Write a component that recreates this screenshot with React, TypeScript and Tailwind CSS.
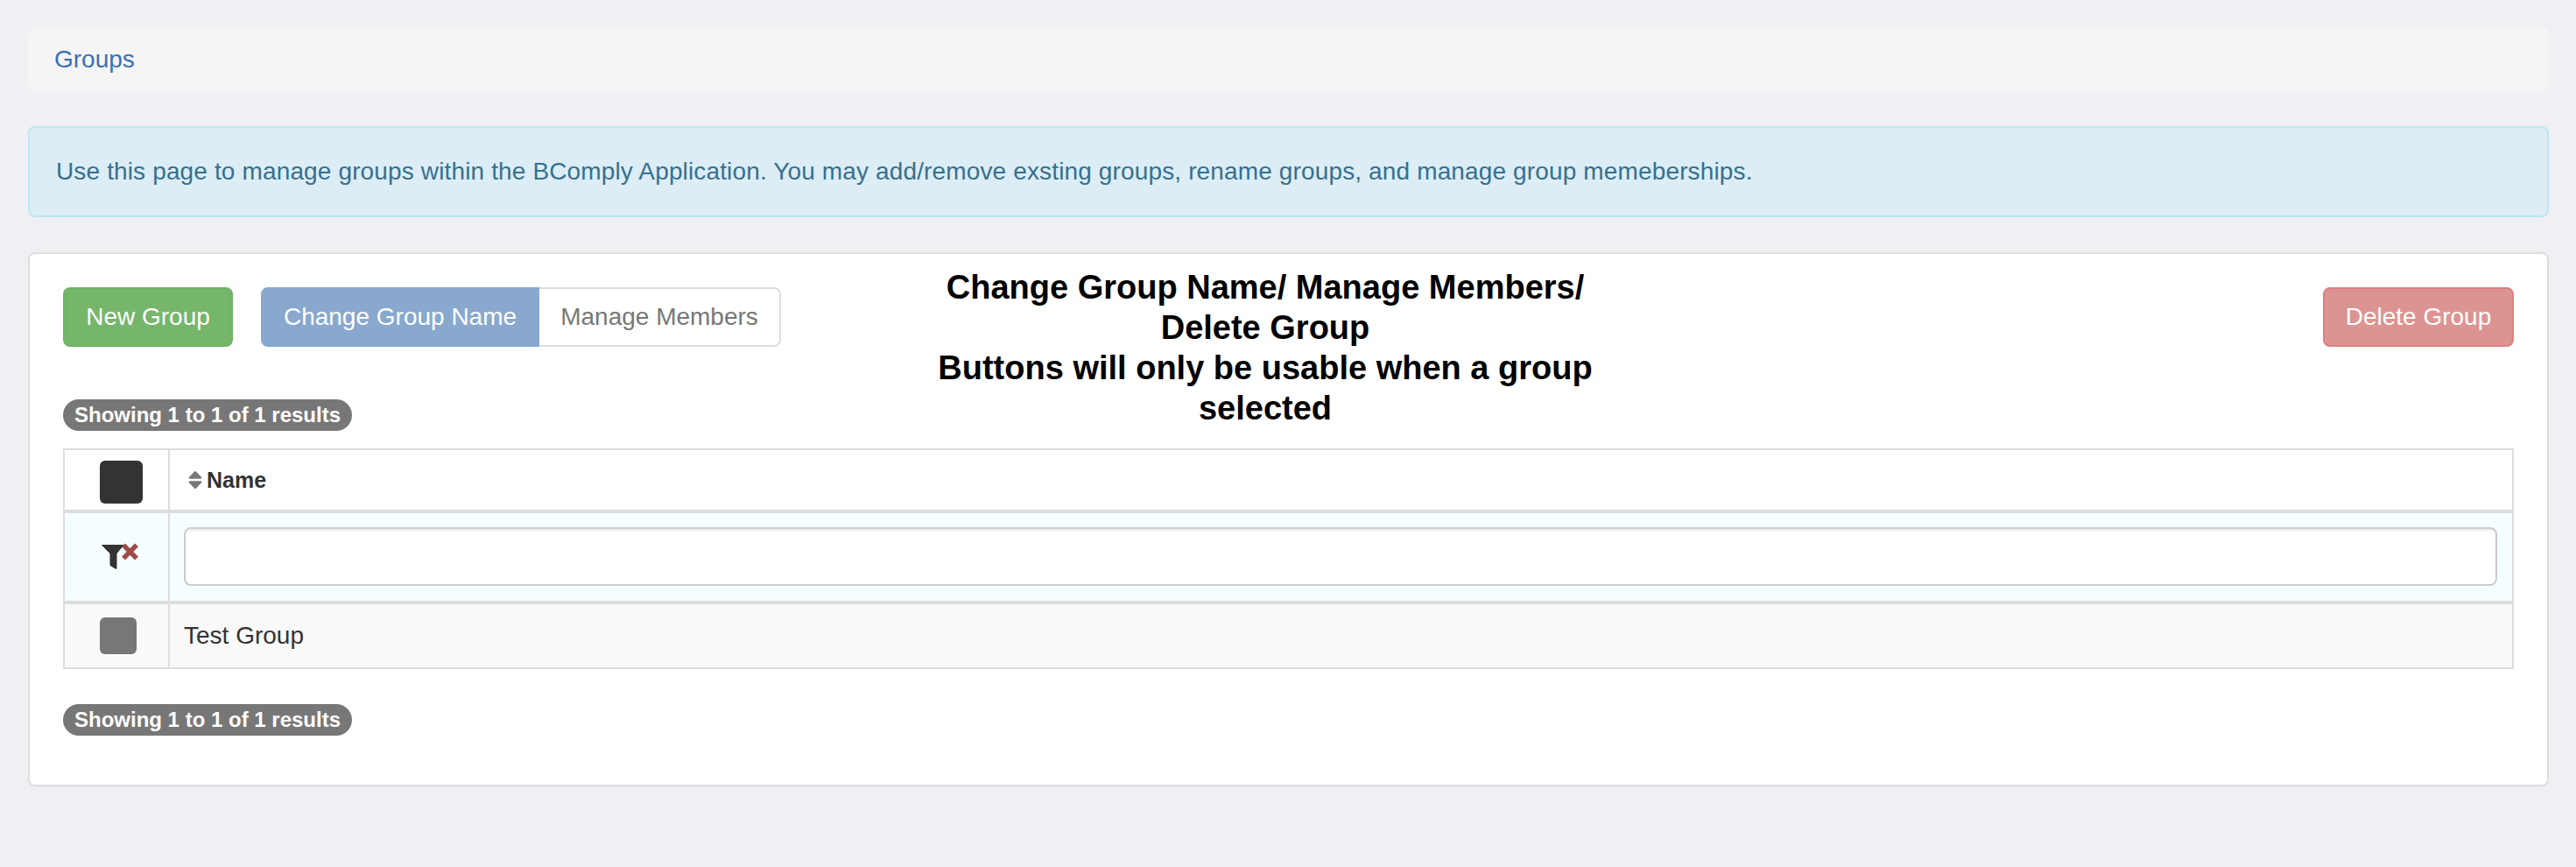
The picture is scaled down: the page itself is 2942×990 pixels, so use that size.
const font = "font-['Liberation_Sans',Arial,sans-serif]";

function ResultsBadge() {
  return (
    <span className="inline-block h-9 w-[330px] rounded-[18px] bg-[#777777] text-center text-[24px] leading-[36px] font-bold whitespace-nowrap text-white">
      Showing 1 to 1 of 1 results
    </span>
  );
}

function SortIcon() {
  return (
    <svg width="16" height="20" viewBox="0 0 16 20" className="shrink-0" fill="#777777">
      <path d="M7 .6a1.4 1.4 0 0 1 2 0l6 6.2c.5.7.2 1.900-1 1.900H2C.8 8.700.5 7.500 1 6.800z" />
      <path d="M7 19.400a1.400 1.400 0 0 0 2 0l6-6.200c.5-.7.2-1.900-1-1.900H2c-1.200 0-1.500 1.200-1 1.900z" />
    </svg>
  );
}

function ClearFilterIcon() {
  return (
    <svg width="44" height="32" viewBox="0 0 44 32" className="mt-[-5px]">
      <path d="M.5 4.500H25L17 14v17c0 .5-.5.6-1 .3l-6-3.800V14z" fill="#333333" stroke="#333333" strokeWidth="1" strokeLinejoin="round" />
      <path d="M25 4.300 L40 19.700 M40 4.300 L25 19.700" stroke="#a04a46" strokeWidth="5.500" />
    </svg>
  );
}

export default function App() {
  return (
    <div className={`${font} min-h-screen bg-[#efeff4] pt-8 pr-[31px] pl-8 text-[28px] leading-10 text-[#333333]`}>
      <div className="flex h-[72px] items-center rounded-lg bg-[#f5f5f5] px-[30px]">
        <a href="#groups" className="text-[#3871b5]">
          Groups
        </a>
      </div>

      <div className="mt-10 flex h-[104px] items-center rounded-lg border-2 border-[#bce8f1] bg-[#dcedf6] px-[30px] tracking-[0.14px] text-[#36708f]">
        Use this page to manage groups within the BComply Application. You may add/remove exsting groups, rename groups, and manage group memeberships.
      </div>

      <div className="mt-10 h-[610px] rounded-lg border-2 border-[#dddddd] bg-white px-[38px] pt-[38px]">
        <div className="flex h-[68px] items-start">
          <button className="h-[68px] w-[194px] rounded-lg border-2 border-[#6fb366] bg-[#75b66b] text-white">New Group</button>
          <div className="ml-[32px] flex">
            <button className="h-[68px] w-[318px] rounded-l-lg border-2 border-[#88a8cd] bg-[#88a8cd] text-white">Change Group Name</button>
            <button className="h-[68px] w-[276px] rounded-r-lg border-2 border-l-0 border-[#dddddd] bg-white text-[#777777]">Manage Members</button>
          </div>
          <div className="mt-[-23px] ml-[171px] h-[68px] w-[764px] shrink-0 text-center text-[38px] leading-[46px] font-bold text-black">
            Change Group Name/ Manage Members/ Delete Group
            <br />
            Buttons will only be usable when a group selected
          </div>
          <button className="ml-auto h-[68px] w-[218px] rounded-lg border-2 border-[#d9827e] bg-[#dc9492] text-white">Delete Group</button>
        </div>

        <div className="mt-[60px] flex h-9">
          <ResultsBadge />
        </div>

        <div className="mt-5 border-2 border-[#dddddd]">
          <div className="flex h-[72px] border-b-4 border-[#dddddd]">
            <div className="flex w-[120px] shrink-0 items-start border-r-2 border-[#dddddd] pt-3 pl-10">
              <div className="h-[49px] w-[49px] rounded-md bg-[#333333]" />
            </div>
            <div className="flex items-center gap-[5px] pl-[21px] text-[25px] font-bold">
              <SortIcon />
              <span>Name</span>
            </div>
          </div>

          <div className="flex h-[104px] border-b-4 border-[#dddddd] bg-[#f5feff]">
            <div className="flex w-[120px] shrink-0 items-center border-r-2 border-[#dddddd] pl-[42px]">
              <ClearFilterIcon />
            </div>
            <div className="flex-1 pt-4 pr-[17px] pl-4">
              <input className="h-[67px] w-full rounded-lg border-2 border-[#cccccc] bg-white shadow-[inset_0_2px_2px_rgba(0,0,0,0.075)]" />
            </div>
          </div>

          <div className="flex h-[72px] bg-[#f9f9f9]">
            <div className="flex w-[120px] shrink-0 items-center border-r-2 border-[#dddddd] pl-10">
              <div className="h-[42px] w-[42px] rounded-md bg-[#777777]" />
            </div>
            <div className="flex items-center pl-4">Test Group</div>
          </div>
        </div>

        <div className="mt-10 flex h-9">
          <ResultsBadge />
        </div>
      </div>
    </div>
  );
}
